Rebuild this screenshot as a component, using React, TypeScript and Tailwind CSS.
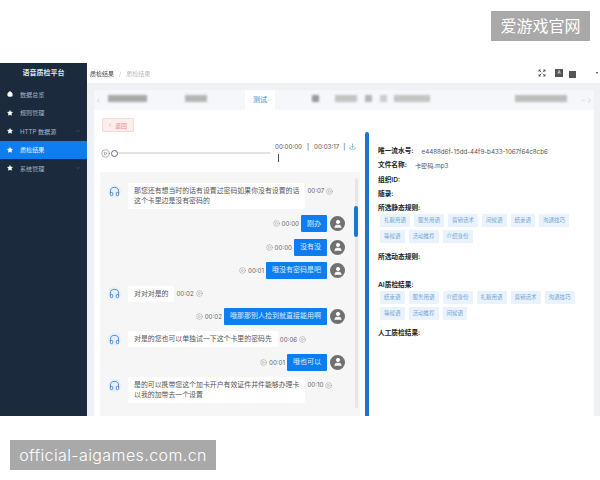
import { ChevronDown, ChevronLeft, ChevronRight, CirclePlay, Download, Expand, Headphones, House, Star, User } from "lucide-react";

const font = "font-['Inter','Noto_Sans_CJK_SC',sans-serif]";

function Nav({ label, active, arrow, home }: { label: string; active?: boolean; arrow?: boolean; home?: boolean }) {
  return (
    <div className={`flex h-[18.5px] items-center pl-[7px] pr-[6px] text-[6.1px] ${active ? "bg-[#0d7df2] text-[#e6f2ff]" : "text-[#aab4c0]"}`}>
      {home ? <House size={6} className="mr-[7px] fill-white text-white" /> : <Star size={6} className="mr-[7px] fill-white text-white" />}
      <span className="flex-1">{label}</span>
      {arrow && <ChevronDown size={6} className="text-[#52606f]" />}
    </div>
  );
}

function Blot({ w, tone = "bg-[#b5b5b5]" }: { w: number; tone?: string }) {
  return <div className={`mb-[3px] h-[7px] blur-[1.2px] ${tone}`} style={{ width: w }} />;
}

function Tags({ items }: { items: string[] }) {
  return (
    <div className="-mt-[1.5px] ml-[2px] flex flex-wrap gap-x-[4px] gap-y-[3px]">
      {items.map((t, i) => (
        <span key={i} className="flex h-[13px] items-center rounded-[1px] bg-[#eaf3fb] px-[4px] text-[5.5px] text-[#6fa3d6]">{t}</span>
      ))}
    </div>
  );
}

function Field({ k, v, cls = "" }: { k: string; v?: string; cls?: string }) {
  return (
    <div className={`flex h-[14.3px] items-center text-[6.7px] ${cls}`}>
      <span className="font-semibold text-[#222]">{k}</span>
      {v && <span className="ml-[8px] text-[6.2px] text-[#555]">{v}</span>}
    </div>
  );
}

function Agent({ lines, time }: { lines: string[]; time: string }) {
  return (
    <div className="flex items-start">
      <div className="flex h-[16px] w-[28px] shrink-0 items-center justify-center">
        <div className="flex h-[13px] w-[13px] items-center justify-center rounded-full bg-[#e6f0fa]">
          <Headphones size={11} className="text-[#3f86cc]" />
        </div>
      </div>
      <div className="rounded-[2px] bg-white px-[6px] py-[3px] text-[6.9px] leading-[10px] text-[#555]">
        {lines.map((l, i) => <div key={i}>{l}</div>)}
      </div>
      <div className="ml-[2px] flex h-[16px] items-center gap-[2px] text-[6.2px] text-[#666]">
        <span>{time}</span>
        <CirclePlay size={7} strokeWidth={1.4} className="text-[#888]" />
      </div>
    </div>
  );
}

function Me({ text, time }: { text: string; time: string }) {
  return (
    <div className="flex items-center justify-end pr-[3px]">
      <CirclePlay size={7} strokeWidth={1.4} className="mr-[2px] text-[#888]" />
      <span className="mr-[2px] text-[6.2px] text-[#666]">{time}</span>
      <div className="flex h-[17px] items-center rounded-[1px] bg-[#0d7df2] px-[6px] text-[7px] text-[#dcecff]">{text}</div>
      <div className="ml-[3px] flex h-[15px] w-[15px] items-center justify-center rounded-full bg-[#707070]">
        <User size={10} className="fill-white text-white" />
      </div>
    </div>
  );
}

export default function App() {
  return (
    <div className={`relative h-[480px] w-[600px] overflow-hidden bg-white pt-[63px] ${font}`}>
      <div className="flex h-[353px] blur-[0.5px]">
        <aside className="w-[87px] shrink-0 bg-[#1b2a3d]">
          <div className="mb-[2px] flex h-[20px] items-center justify-center text-[7px] font-semibold text-[#dfe4ea]">语音质检平台</div>
          <Nav label="数据总览" home />
          <Nav label="规则管理" />
          <Nav label="HTTP 数据源" arrow />
          <Nav label="质检结果" active />
          <Nav label="系统管理" arrow />
        </aside>
        <main className="flex min-w-0 flex-1 flex-col">
          <header className="flex h-[20px] shrink-0 items-center pl-[3px] pr-[2px] text-[6px]">
            <span className="text-[#444]">质检结果</span>
            <span className="mx-[5px] text-[#ccc]">/</span>
            <span className="text-[#bbb]">质检结果</span>
            <div className="ml-auto flex items-center">
              <Expand size={8} className="mr-[9px] text-[#333]" />
              <div className="mr-[6px] flex h-[8px] w-[8px] items-center justify-center bg-[#555] text-[4.5px] text-white">A</div>
              <div className="mr-[20px] mt-[2px] h-[7px] w-[7px] bg-[#555]" />
              <div className="h-0 w-0 border-x-[1.5px] border-t-[2px] border-x-transparent border-t-[#333]" />
            </div>
          </header>
          <div className="flex min-h-0 flex-1 flex-col bg-[#eff1f4] pl-[7px] pr-[6px] pt-[7px]">
            <div className="flex h-[20px] shrink-0 items-center bg-[#f5f7fa] text-[#bbb]">
              <ChevronLeft size={7} className="ml-[1px]" />
              <div className="ml-[6px]"><Blot w={39} tone="bg-[#a9a9a9]" /></div>
              <div className="ml-[38px]"><Blot w={22} /></div>
              <div className="ml-[38px] flex h-full w-[30px] items-center justify-center bg-white text-[7px] text-[#2f8ae0]">测试</div>
              <div className="ml-[37px]"><Blot w={7} tone="bg-[#999]" /></div>
              <div className="ml-[16px]"><Blot w={22} tone="bg-[#c4c4c4]" /></div>
              <div className="ml-[8px]"><Blot w={7} /></div>
              <div className="ml-[8px]"><Blot w={7} tone="bg-[#ccc]" /></div>
              <div className="ml-[7px]"><Blot w={36} tone="bg-[#c4c4c4]" /></div>
              <div className="ml-[85px]"><Blot w={52} tone="bg-[#bdbdbd]" /></div>
              <ChevronDown size={5} className="ml-[14px]" />
              <ChevronRight size={7} />
            </div>
            <div className="flex min-h-0 flex-1 bg-white">
              <div className="flex w-[266px] shrink-0 flex-col pl-[6px]">
                <div className="pt-[8px]">
                  <div className="ml-[2px] flex h-[14px] w-[32px] items-center rounded-[1px] border border-[#f8d8d8] bg-[#fdeeee] pl-[4px] text-[6px] text-[#ee8b8b]">
                    <ChevronLeft size={6} className="mr-[2px]" />退回
                  </div>
                </div>
                <div className="flex h-[40px] items-center">
                  <CirclePlay size={9} strokeWidth={1.2} className="ml-[1px] mt-[2px] shrink-0 text-[#555]" />
                  <div className="ml-[1px] mt-[2px] h-[7px] w-[7px] shrink-0 rounded-full border border-[#5b6b7b] bg-white" />
                  <div className="mt-[2px] h-[2px] w-[152px] shrink-0 bg-[#e3e3e3]" />
                  <div className="ml-[5px] flex flex-col text-[6.2px] text-[#555]">
                    <div className="flex items-center whitespace-nowrap">
                      <span>00:00:00</span>
                      <span className="mx-[5px] text-[#333]">|</span>
                      <span>00:03:17</span>
                      <span className="mx-[4px] text-[#333]">|</span>
                      <Download size={7} className="text-[#4a98c8]" />
                    </div>
                    <div className="ml-[3px] mt-[3px] h-[8px] w-[1px] bg-[#555]" />
                  </div>
                </div>
                <div className="relative flex min-h-0 flex-1 flex-col gap-[6.4px] bg-[#f6f6f6] pr-[12px] pt-[11px]">
                  <Agent lines={["那您还有想当时的话有设置过密码如果你没有设置的话", "这个卡里边是没有密码的"]} time="00:07" />
                  <Me text="刚办" time="00:00" />
                  <Me text="没有没" time="00:00" />
                  <Me text="哦没有密码是吧" time="00:01" />
                  <Agent lines={["对对对是的"]} time="00:02" />
                  <Me text="哦那那别人捡到就直接能用啊" time="00:02" />
                  <Agent lines={["对是的您也可以单独试一下这个卡里的密码先"]} time="00:06" />
                  <Me text="哦也可以" time="00:01" />
                  <Agent lines={["是的可以携带您这个加卡开户有效证件并件能够办理卡", "以我的加带去一个设置"]} time="00:10" />
                  <div className="absolute bottom-[8px] right-[2px] top-[6px] w-[3px] rounded-full bg-[#e6e6e6]" />
                  <div className="absolute right-[2px] top-[34px] h-[31px] w-[4px] rounded-full bg-[#1b76d2]" />
                </div>
              </div>
              <div className="flex min-w-0 flex-1">
                <div className="ml-[5px] mt-[22px] w-[4px] shrink-0 rounded-t-full bg-[#1b76d2]" />
                <div className="min-w-0 flex-1 pl-[9px] pt-[34px]">
                  <Field k="唯一流水号:" v="e4488d6f-15dd-44f9-b433-1067f64c8cb6" />
                  <Field k="文件名称:" v="卡密码.mp3" />
                  <Field k="组织ID:" />
                  <Field k="随录:" />
                  <Field k="所选静态规则:" />
                  <Tags items={["礼貌用语", "服务用语", "营销话术", "问候语", "结束语", "沟通技巧", "等候语", "活动推荐", "介绍身份"]} />
                  <Field k="所选动态规则:" cls="mt-[7px]" />
                  <Field k="AI质检结果:" cls="mt-[14px]" />
                  <Tags items={["结束语", "服务用语", "介绍身份", "礼貌用语", "营销话术", "沟通技巧", "等候语", "活动推荐", "问候语"]} />
                  <Field k="人工质检结果:" cls="mt-[6px]" />
                </div>
              </div>
            </div>
          </div>
        </main>
      </div>
      <div className="absolute right-[10px] top-[11px] flex h-[30px] w-[99px] items-center justify-center bg-[#a9a9a9] text-[16px] text-white">爱游戏官网</div>
      <div className="absolute bottom-[10px] left-[10px] flex h-[30px] w-[206px] items-center justify-center bg-[#a9a9a9] text-[16px] font-light tracking-[0.4px] text-white">official-aigames.com.cn</div>
    </div>
  );
}
